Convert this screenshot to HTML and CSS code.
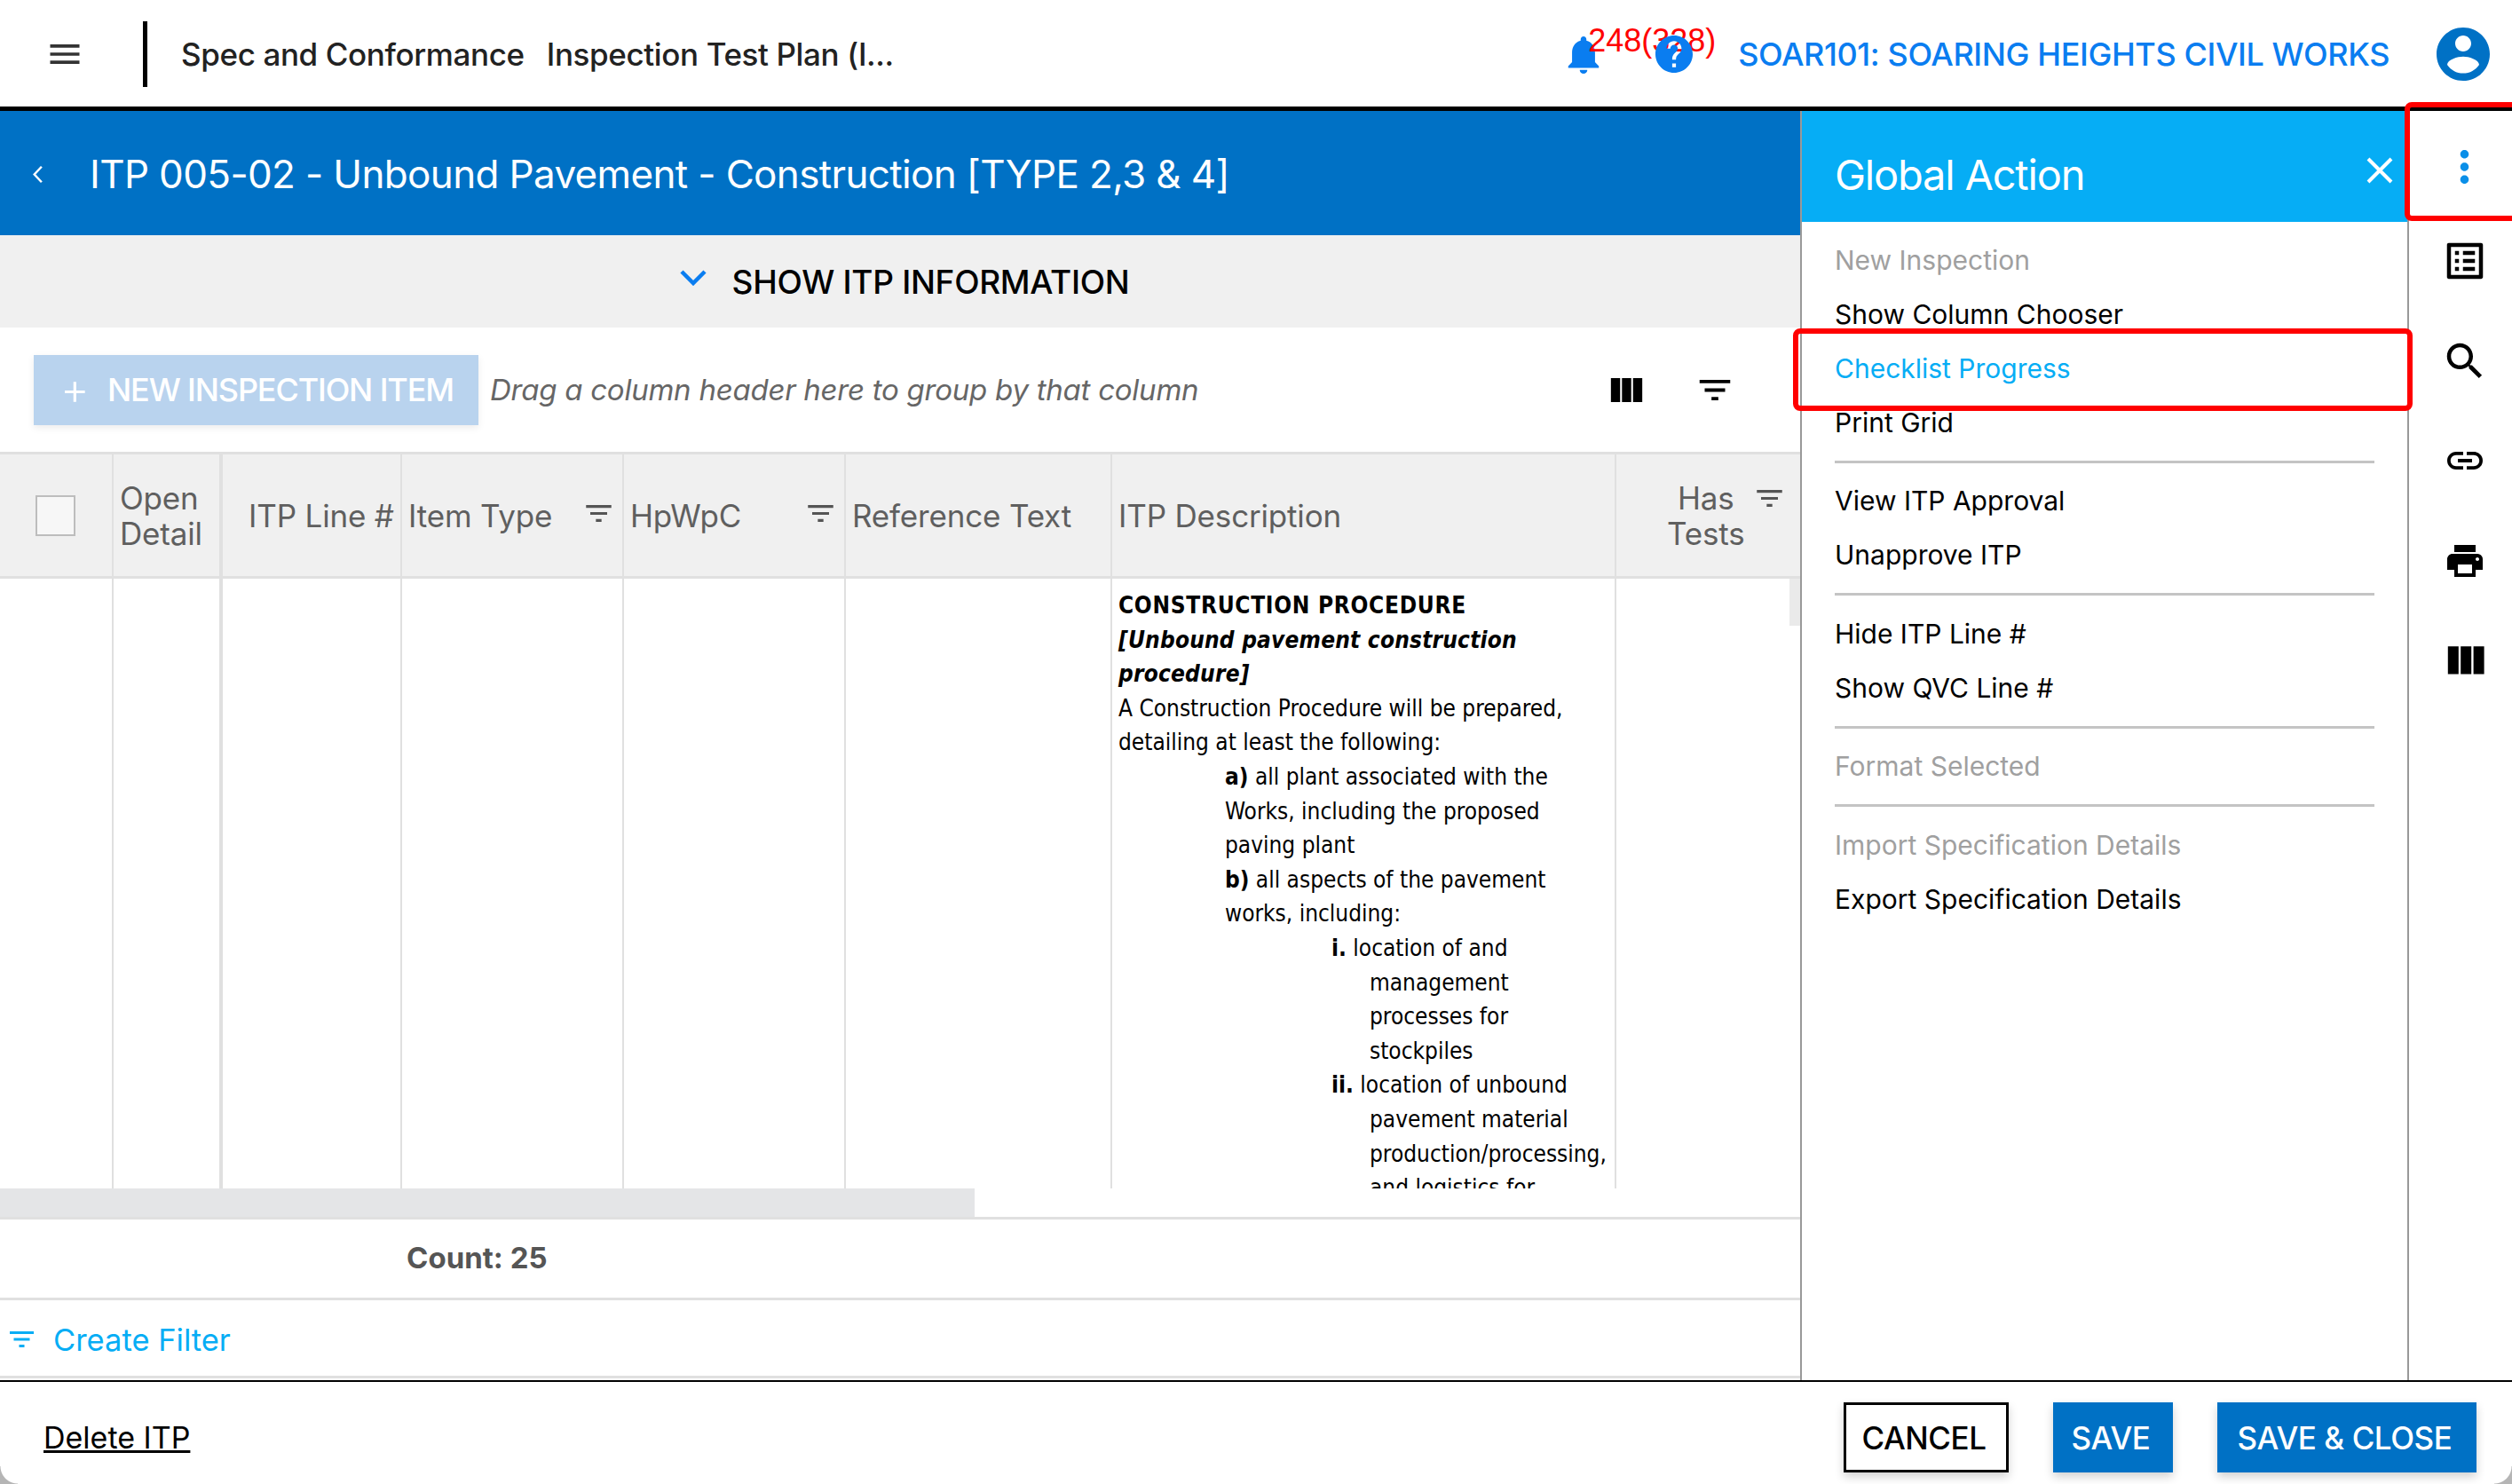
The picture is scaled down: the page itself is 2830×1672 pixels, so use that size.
FILE: index.html
```html
<!doctype html>
<html lang="en">
<head>
    <meta charset="utf-8">
    <title>Inspection Test Plan</title>
    <link rel="stylesheet" href="styles.css">
</head>
<body>
<div class="app">
    <header class="topbar">
        <svg class="menu-icon" viewBox="3 6 18 12"><path d="M3 18h18v-2H3v2zm0-5h18v-2H3v2zm0-7v2h18V6H3z"/></svg>
        <div class="topbar-divider"></div>
        <span class="crumb">Spec and Conformance</span>
        <span class="crumb crumb-second">Inspection Test Plan (I...</span>
        <div class="topbar-right">
            <div class="notify">
                <svg class="bell-icon" viewBox="4 2.5 16 19.5"><path d="M12 22c1.1 0 2-.9 2-2h-4c0 1.1.89 2 2 2zm6-6v-5c0-3.07-1.64-5.64-4.5-6.32V4c0-.83-.67-1.5-1.5-1.5s-1.5.67-1.5 1.5v.68C7.63 5.36 6 7.92 6 11v5l-2 2v1h16v-1l-2-2z"/></svg>
                <span class="notify-count">248(328)</span>
                <svg class="help-icon" viewBox="2 2 20 20"><path d="M12 2C6.48 2 2 6.48 2 12s4.48 10 10 10 10-4.48 10-10S17.52 2 12 2zm1 17h-2v-2h2v2zm2.07-7.75l-.9.92C13.45 12.9 13 13.5 13 15h-2v-.5c0-1.1.45-2.1 1.17-2.83l1.24-1.26c.37-.36.59-.86.59-1.41 0-1.1-.9-2-2-2s-2 .9-2 2H8c0-2.21 1.79-4 4-4s4 1.79 4 4c0 .88-.36 1.68-.93 2.25z"/></svg>
            </div>
            <span class="project">SOAR101: SOARING HEIGHTS CIVIL WORKS</span>
            <svg class="avatar-icon" viewBox="2 2 20 20"><path d="M12 2C6.48 2 2 6.48 2 12s4.48 10 10 10 10-4.48 10-10S17.52 2 12 2zm0 3c1.66 0 3 1.34 3 3s-1.34 3-3 3-3-1.34-3-3 1.34-3 3-3zm0 14.2c-2.5 0-4.71-1.28-6-3.22.03-1.99 4-3.08 6-3.08 1.99 0 5.97 1.09 6 3.08-1.29 1.94-3.5 3.22-6 3.22z"/></svg>
        </div>
    </header>

    <main class="workspace">
        <section class="content">
            <div class="title-bar">
                <svg class="back-icon" viewBox="0 0 12 20"><path d="M9.5 3 3 10l6.5 7" fill="none" stroke="#fff" stroke-width="2"/></svg>
                <h1>ITP 005-02 - Unbound Pavement - Construction [TYPE 2,3 &amp; 4]</h1>
            </div>
            <div class="info-bar">
                <svg class="chevron-icon" viewBox="0 0 30 18"><path d="M2 2l13 13L28 2" fill="none" stroke="#0a7df0" stroke-width="4.5"/></svg>
                <span>SHOW ITP INFORMATION</span>
            </div>
            <div class="toolbar">
                <button type="button" class="new-item"><span class="plus">+</span>NEW INSPECTION ITEM</button>
                <span class="group-hint">Drag a column header here to group by that column</span>
                <svg class="tool-columns" viewBox="4 5 17 13"><path d="M10 18h5V5h-5v13zm-6 0h5V5H4v13zM16 5v13h5V5h-5z"/></svg>
                <svg class="tool-filter" viewBox="3 6 18 12"><path d="M10 18h4v-2h-4v2zM3 6v2h18V6H3zm3 7h12v-2H6v2z"/></svg>
            </div>

            <div class="grid-row grid-head">
                <div class="cell check-cell"><span class="checkbox"></span></div>
                <div class="cell head-open">Open<br>Detail</div>
                <div class="cell thick head-line">ITP Line #</div>
                <div class="cell head-filter">Item Type
                    <svg class="col-filter" viewBox="3 6 18 12"><path d="M10 18h4v-2h-4v2zM3 6v2h18V6H3zm3 7h12v-2H6v2z"/></svg>
                </div>
                <div class="cell head-filter">HpWpC
                    <svg class="col-filter" viewBox="3 6 18 12"><path d="M10 18h4v-2h-4v2zM3 6v2h18V6H3zm3 7h12v-2H6v2z"/></svg>
                </div>
                <div class="cell">Reference Text</div>
                <div class="cell">ITP Description</div>
                <div class="cell head-tests">Has<br>Tests
                    <svg class="col-filter tests-filter" viewBox="3 6 18 12"><path d="M10 18h4v-2h-4v2zM3 6v2h18V6H3zm3 7h12v-2H6v2z"/></svg>
                </div>
            </div>
            <div class="grid-row grid-body">
                <div class="cell"></div>
                <div class="cell"></div>
                <div class="cell thick"></div>
                <div class="cell"></div>
                <div class="cell"></div>
                <div class="cell"></div>
                <div class="cell desc">
                    <div class="desc-title"><b>CONSTRUCTION PROCEDURE</b></div>
                    <div class="desc-sub"><b><i>[Unbound pavement construction procedure]</i></b></div>
                    <div>A Construction Procedure will be prepared, detailing at least the following:</div>
                    <div class="lvl-1"><b>a)</b> all plant associated with the Works, including the proposed paving plant</div>
                    <div class="lvl-1"><b>b)</b> all aspects of the pavement works, including:</div>
                    <div class="lvl-2"><b>i.</b> location of and management processes for stockpiles</div>
                    <div class="lvl-2"><b>ii.</b> location of unbound pavement material production/processing, and logistics for</div>
                </div>
                <div class="cell scroll-cell"><span class="v-thumb"></span></div>
            </div>
            <div class="h-scroll"><span class="h-thumb"></span></div>
            <div class="count-row">Count: 25</div>
            <div class="filter-row">
                <svg class="create-filter-icon" viewBox="3 6 18 12"><path d="M10 18h4v-2h-4v2zM3 6v2h18V6H3zm3 7h12v-2H6v2z"/></svg>
                <span>Create Filter</span>
            </div>
        </section>

        <aside class="global-panel">
            <div class="panel-head">
                <h2>Global Action</h2>
                <svg class="close-icon" viewBox="0 0 30 30"><path d="M2 2l26 26M28 2L2 28" stroke="#fff" stroke-width="4"/></svg>
            </div>
            <ul class="action-list">
                <li class="disabled">New Inspection</li>
                <li>Show Column Chooser</li>
                <li class="active">Checklist Progress<span class="red-box item-box"></span></li>
                <li>Print Grid</li>
                <li class="sep"></li>
                <li>View ITP Approval</li>
                <li>Unapprove ITP</li>
                <li class="sep"></li>
                <li>Hide ITP Line #</li>
                <li>Show QVC Line #</li>
                <li class="sep"></li>
                <li class="disabled">Format Selected</li>
                <li class="sep"></li>
                <li class="disabled">Import Specification Details</li>
                <li>Export Specification Details</li>
            </ul>
        </aside>

        <nav class="side-rail">
            <div class="rail-item rail-active">
                <svg class="rail-dots" viewBox="10 4 4 16"><path d="M12 8c1.1 0 2-.9 2-2s-.9-2-2-2-2 .9-2 2 .9 2 2 2zm0 2c-1.1 0-2 .9-2 2s.9 2 2 2 2-.9 2-2-.9-2-2-2zm0 6c-1.1 0-2 .9-2 2s.9 2 2 2 2-.9 2-2-.9-2-2-2z"/></svg>
                <span class="red-box rail-box"></span>
            </div>
            <div class="rail-item">
                <svg class="rail-large" viewBox="0 0 24 24"><path d="M19 5v14H5V5h14m1.1-2H3.900c-.5 0-.9.4-.9.9v16.200c0 .4.4.9.9.9h16.200c.4 0 .9-.5.9-.9V3.900c0-.5-.5-.9-.9-.9zM11 7h6v2h-6V7zm0 4h6v2h-6v-2zm0 4h6v2h-6zM7 7h2v2H7zm0 4h2v2H7zm0 4h2v2H7z"/></svg>
            </div>
            <div class="rail-item">
                <svg class="rail-large" viewBox="0 0 24 24"><path d="M15.500 14h-.79l-.28-.27C15.410 12.590 16 11.110 16 9.500 16 5.910 13.090 3 9.500 3S3 5.910 3 9.500 5.910 16 9.500 16c1.610 0 3.090-.59 4.230-1.570l.27.28v.79l5 4.990L20.490 19l-4.990-5zm-6 0C7.010 14 5 11.990 5 9.500S7.010 5 9.500 5 14 7.010 14 9.500 11.990 14 9.500 14z"/></svg>
            </div>
            <div class="rail-item">
                <svg viewBox="0 0 24 24"><path d="M3.900 12c0-1.710 1.390-3.100 3.100-3.100h4V7H7c-2.760 0-5 2.240-5 5s2.240 5 5 5h4v-1.900H7c-1.710 0-3.100-1.390-3.100-3.100zM8 13h8v-2H8v2zm9-6h-4v1.900h4c1.710 0 3.100 1.390 3.100 3.100s-1.390 3.100-3.100 3.100h-4V17h4c2.760 0 5-2.240 5-5s-2.240-5-5-5z"/></svg>
            </div>
            <div class="rail-item">
                <svg viewBox="0 0 24 24"><path d="M19 8H5c-1.660 0-3 1.340-3 3v6h4v4h12v-4h4v-6c0-1.660-1.340-3-3-3zm-3 11H8v-5h8v5zm3-7c-.55 0-1-.45-1-1s.45-1 1-1 1 .45 1 1-.45 1-1 1zm-1-9H6v4h12V3z"/></svg>
            </div>
            <div class="rail-item">
                <svg viewBox="2 2 20 20"><path d="M10 18h5V5h-5v13zm-6 0h5V5H4v13zM16 5v13h5V5h-5z"/></svg>
            </div>
        </nav>
    </main>

    <footer class="footer">
        <a class="delete-link">Delete ITP</a>
        <div class="footer-buttons">
            <button type="button" class="btn-cancel">CANCEL</button>
            <button type="button" class="btn-save">SAVE</button>
            <button type="button" class="btn-save btn-save-close">SAVE &amp; CLOSE</button>
        </div>
    </footer>
    <span class="window-corner"></span>
    <span class="window-corner window-corner-right"></span>
</div>
</body>
</html>
```

FILE: styles.css
```css
* {
    box-sizing: border-box;
}

html, body {
    margin: 0;
    height: 100%;
}

body {
    background-color: #ffffff;
    color: #000000;
    font-family: Inter, "Liberation Sans", sans-serif;
    overflow: hidden;
}

.app {
    position: relative;
    display: flex;
    flex-direction: column;
    width: 2830px;
    height: 1672px;
    overflow: hidden;
}

/* top bar */

.topbar {
    display: flex;
    align-items: center;
    flex: 0 0 125px;
    padding: 2px 25px 0 56px;
    border-bottom: 5px solid #000000;
}

.menu-icon {
    width: 34px;
    height: 22px;
    fill: #333333;
}

.topbar-divider {
    width: 5px;
    height: 74px;
    margin: 0 38px 0 71px;
    background-color: #000000;
}

.crumb {
    font-size: 35px;
    font-weight: 500;
    color: #222222;
    letter-spacing: -0.38px;
}

.crumb-second {
    margin-left: 25px;
}

.topbar-right {
    display: flex;
    align-items: center;
    margin-left: auto;
}

.notify {
    position: relative;
    width: 193px;
    height: 60px;
}

.bell-icon {
    position: absolute;
    left: 0;
    top: 10px;
    width: 38px;
    height: 42px;
    fill: #0a7df0;
}

.help-icon {
    position: absolute;
    left: 100px;
    top: 9px;
    width: 42px;
    height: 42px;
    fill: #0a7df0;
}

.notify-count {
    position: absolute;
    left: 24px;
    top: -6px;
    font-family: "Liberation Sans", sans-serif;
    font-size: 36px;
    color: #ff0000;
    white-space: nowrap;
}

.project {
    font-size: 36px;
    font-weight: 500;
    letter-spacing: -0.4px;
    color: #0a7df0;
    white-space: nowrap;
}

.avatar-icon {
    width: 60px;
    height: 60px;
    margin-left: 53px;
    fill: #0071c5;
}

/* main area */

.workspace {
    display: flex;
    flex: 0 0 1432px;
    min-height: 0;
    border-bottom: 2px solid #000000;
}

.content {
    display: flex;
    flex-direction: column;
    flex: 0 0 2028px;
    min-width: 0;
}

.title-bar {
    display: flex;
    align-items: center;
    flex: 0 0 140px;
    padding: 2px 0 0 35px;
    background-color: #0071c5;
    color: #ffffff;
}

.back-icon {
    width: 15px;
    height: 25px;
}

h1 {
    margin: 0 0 0 51px;
    font-size: 44px;
    font-weight: 400;
    letter-spacing: -0.65px;
    white-space: nowrap;
}

.info-bar {
    display: flex;
    align-items: center;
    justify-content: center;
    flex: 0 0 104px;
    padding-left: 10px;
    background-color: #f0f0f0;
    font-size: 37px;
    font-weight: 500;
    letter-spacing: -0.3px;
}

.chevron-icon {
    width: 30px;
    height: 18px;
    margin: -8px 29px 0 0;
}

.toolbar {
    display: flex;
    align-items: center;
    flex: 0 0 140px;
    padding-left: 38px;
}

.new-item {
    display: flex;
    align-items: center;
    width: 501px;
    height: 79px;
    padding: 0 0 0 30px;
    border: 0;
    background-color: #b9d3ee;
    box-shadow: 0 3px 8px rgba(0, 0, 0, 0.08);
    color: #ffffff;
    font-family: inherit;
    font-size: 36px;
    font-weight: 500;
    letter-spacing: -1.15px;
    white-space: nowrap;
}

.plus {
    width: 53px;
    margin-top: -3px;
    font-size: 50px;
    font-weight: 300;
    line-height: 1;
    letter-spacing: 0;
    text-align: left;
}

.group-hint {
    margin-left: 13px;
    font-size: 33px;
    font-style: italic;
    letter-spacing: -0.25px;
    color: #666666;
    white-space: nowrap;
}

.tool-columns {
    width: 37px;
    height: 27px;
    margin-left: auto;
    fill: #000000;
}

.tool-filter {
    width: 36px;
    height: 23px;
    margin: 0 78px 0 63px;
    fill: #000000;
}

/* grid */

.grid-row {
    display: grid;
    grid-template-columns: 126px 121px 204px 250px 250px 300px 568px 209px;
}

.cell {
    position: relative;
    border-left: 2px solid #e0e0e0;
}

.cell:first-child {
    border-left: 0;
}

.cell.thick {
    border-left-width: 4px;
}

.grid-head {
    flex: 0 0 143px;
    background-color: #f0f0f0;
    border-top: 3px solid #e0e0e0;
    border-bottom: 3px solid #e0e0e0;
    color: #5f5f5f;
    font-size: 35px;
    letter-spacing: -0.17px;
    line-height: 40px;
}

.grid-head .cell {
    display: flex;
    align-items: center;
    padding-left: 7px;
    white-space: nowrap;
}

.grid-head .check-cell {
    padding-left: 40px;
}

.checkbox {
    width: 45px;
    height: 46px;
    border: 2px solid #bdbdbd;
    background-color: #f7f7f7;
}

.grid-head .head-line {
    padding-left: 29px;
}

.col-filter {
    position: absolute;
    right: 12px;
    top: 57px;
    width: 29px;
    height: 19px;
    fill: #555555;
}

.grid-head .head-tests {
    text-align: center;
    padding-left: 57px;
}

.col-filter.tests-filter {
    top: 40px;
    right: 20px;
}

.grid-body {
    flex: 0 0 687px;
    overflow: hidden;
}

.desc {
    height: 687px;
    padding: 11px 7px 0 7px;
    overflow: hidden;
    font-family: "DejaVu Sans Condensed", "DejaVu Sans", sans-serif;
    font-stretch: condensed;
    font-size: 26px;
    line-height: 38.6px;
}

.desc-title {
    letter-spacing: 0.7px;
}

.desc-sub {
    letter-spacing: 0.2px;
}

.lvl-1 {
    margin-left: 120px;
}

.lvl-2 {
    margin-left: 283px;
    text-indent: -43px;
}

.scroll-cell {
    display: flex;
    justify-content: flex-end;
    align-items: flex-start;
}

.v-thumb {
    width: 12px;
    height: 53px;
    background-color: #eaeaea;
}

.h-scroll {
    flex: 0 0 32px;
    background-color: #ffffff;
}

.h-thumb {
    display: block;
    width: 1098px;
    height: 100%;
    background-color: #e4e5e7;
}

.count-row {
    flex: 0 0 94px;
    padding-left: 458px;
    border-top: 3px solid #e0e0e0;
    border-bottom: 3px solid #e0e0e0;
    color: #555555;
    font-size: 33px;
    font-weight: 700;
    line-height: 87px;
}

.filter-row {
    display: flex;
    align-items: center;
    flex: 0 0 88px;
    padding: 3px 0 0 11px;
    border-bottom: 3px solid #e0e0e0;
    color: #06adf5;
    font-size: 34.5px;
}

.create-filter-icon {
    width: 27px;
    height: 18px;
    margin-right: 22px;
    fill: #06adf5;
}

/* global action panel */

.global-panel {
    flex: 0 0 686px;
    border-left: 2px solid #999999;
    border-right: 2px solid #999999;
}

.panel-head {
    display: flex;
    align-items: center;
    justify-content: space-between;
    height: 125px;
    padding: 0 16px 0 37px;
    background-color: #06adf5;
    color: #ffffff;
}

h2 {
    margin: 18px 0 0 0;
    font-size: 47px;
    font-weight: 400;
    letter-spacing: -1.2px;
}

.close-icon {
    width: 30px;
    height: 30px;
    margin-top: 8px;
}

.action-list {
    margin: 0;
    padding: 13px 37px 0 37px;
    list-style: none;
    font-size: 30px;
}

.action-list li {
    position: relative;
    height: 61px;
    line-height: 61px;
    white-space: nowrap;
}

.action-list li.sep {
    height: 3px;
    margin: 12px 0 12.4px 0;
    background-color: #c4c4c4;
}

.disabled {
    color: #a0a0a0;
}

.active {
    color: #06adf5;
}

.red-box {
    position: absolute;
    border: 6px solid #ff0000;
    border-radius: 8px;
    pointer-events: none;
}

.item-box {
    left: -47px;
    right: -43px;
    top: -15px;
    height: 93px;
}

/* icons on the right */

.side-rail {
    display: flex;
    flex-direction: column;
    flex: 1;
    padding: 13px 0 0 9px;
}

.rail-item {
    position: relative;
    display: flex;
    align-items: center;
    justify-content: center;
    flex: 0 0 112.6px;
}

.rail-item svg {
    width: 48px;
    height: 48px;
    fill: #000000;
}

.rail-item .rail-large {
    width: 54px;
    height: 54px;
}

.rail-item.rail-active {
    flex-basis: 100px;
}

.rail-item .rail-dots {
    width: 13px;
    height: 38px;
    fill: #0a8fe8;
}

.rail-box {
    left: -14px;
    right: -10px;
    top: -23px;
    bottom: -11px;
}

/* footer */

.footer {
    display: flex;
    align-items: center;
    justify-content: space-between;
    flex: 1;
    padding: 10px 40px 0 49px;
}

.delete-link {
    font-size: 34px;
    text-decoration: underline;
    text-decoration-thickness: 3px;
}

.footer-buttons {
    display: flex;
    gap: 50px;
}

.footer-buttons button {
    height: 79px;
    padding: 0 5px 0 0;
    border: 0;
    font-family: inherit;
    font-size: 35px;
    font-weight: 500;
    letter-spacing: -0.45px;
    box-shadow: 0 5px 10px rgba(0, 0, 0, 0.18);
}

.footer-buttons .btn-cancel {
    width: 186px;
    border: 3px solid #000000;
    background-color: #ffffff;
    color: #000000;
}

.btn-save {
    width: 135px;
    background-color: #0071c5;
    color: #ffffff;
}

.btn-save-close {
    width: 292px;
}

.window-corner {
    position: absolute;
    left: 0;
    bottom: 0;
    width: 20px;
    height: 20px;
    background: radial-gradient(circle at 100% 0, transparent 19px, #b5b5b5 20px);
}

.window-corner-right {
    left: auto;
    right: 0;
    background: radial-gradient(circle at 0 0, transparent 19px, #b5b5b5 20px);
}
```
